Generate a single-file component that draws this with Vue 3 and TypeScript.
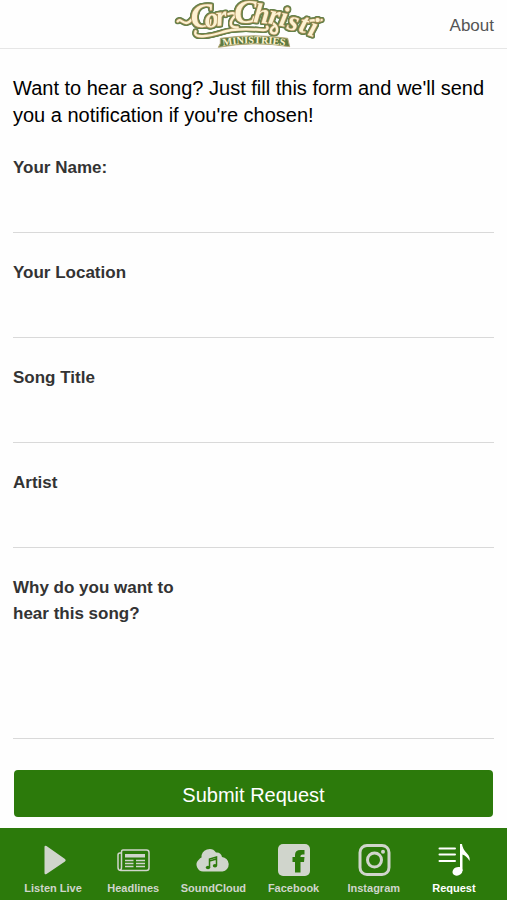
<script setup lang="ts">
import { reactive, ref } from 'vue'

type FieldKey = 'name' | 'location' | 'title' | 'artist'
type TabIcon = 'play' | 'news' | 'cloud' | 'facebook' | 'instagram' | 'request'

const fields: { key: FieldKey; label: string }[] = [
  { key: 'name', label: 'Your Name:' },
  { key: 'location', label: 'Your Location' },
  { key: 'title', label: 'Song Title' },
  { key: 'artist', label: 'Artist' },
]

const tabs: { icon: TabIcon; label: string }[] = [
  { icon: 'play', label: 'Listen Live' },
  { icon: 'news', label: 'Headlines' },
  { icon: 'cloud', label: 'SoundCloud' },
  { icon: 'facebook', label: 'Facebook' },
  { icon: 'instagram', label: 'Instagram' },
  { icon: 'request', label: 'Request' },
]

const form = reactive<Record<FieldKey, string>>({ name: '', location: '', title: '', artist: '' })
const reason = ref('')
const active = ref<TabIcon>('request')

// Outline layers of the logo's swashes, from the outer rim to the face
const layers = ['rim', 'face']
</script>

<template>
  <div class="screen">
    <header class="top">
      <svg class="logo" viewBox="10 0 510 147" role="img" aria-label="Cor Christi Ministries">
        <g class="lettering">
          <g v-for="layer in layers" :key="layer" :class="layer">
            <path d="M36 64C44 52 52 74 66 68C80 62 84 48 92 38" />
            <path d="M90 94C84 108 100 110 118 108C150 106 170 94 198 90C232 86 268 88 292 90C304 91 308 84 304 80" />
            <path d="M188 42C206 36 214 42 204 52C192 66 190 84 216 82" />
            <path d="M322 70C340 82 336 102 324 100C312 98 314 86 324 80" />
            <path d="M428 66C440 54 452 66 468 60" />
          </g>
          <text class="script" x="78 120 154" y="84 84 78" rotate="-6 -8 -8"><tspan class="cap">C</tspan>or</text>
          <text class="script" x="206 262 306 338 362 396 424" y="68 66 70 76 86 94 104" rotate="0 6 10 12 14 16 18"><tspan class="cap">C</tspan>hristi</text>
        </g>
        <path class="banner" d="M164 115Q264 100 366 115L372 140Q264 122 158 142L164 130Z" />
        <path id="ministries-arc" d="M164 139Q264 121 366 139" fill="none" />
        <text class="ministries"><textPath href="#ministries-arc" startOffset="50%" text-anchor="middle">MINISTRIES</textPath></text>
      </svg>
      <a class="about" href="#about">About</a>
    </header>

    <main class="content">
      <p class="intro">Want to hear a song? Just fill this form and we'll send you a notification if you're chosen!</p>
      <form class="form" @submit.prevent>
        <div v-for="field in fields" :key="field.key" class="field">
          <label :for="field.key">{{ field.label }}</label>
          <input :id="field.key" v-model="form[field.key]" type="text" />
        </div>
        <div class="field">
          <label for="reason">Why do you want to hear this song?</label>
          <textarea id="reason" v-model="reason"></textarea>
        </div>
        <button class="submit" type="submit">Submit Request</button>
      </form>
    </main>

    <nav class="tabs">
      <button
        v-for="tab in tabs"
        :key="tab.icon"
        class="tab"
        :class="{ active: tab.icon === active }"
        type="button"
        @click="active = tab.icon"
      >
        <svg class="icon" viewBox="0 0 36 36" aria-hidden="true">
          <path v-if="tab.icon === 'play'" class="solid" d="M9.500 5Q9.500 3 11.500 4L30 17Q31.500 18 30 19.500L11.500 32Q9.500 33 9.500 31Z" />
          <g v-else-if="tab.icon === 'news'">
            <path class="line" d="M8 8H31.500Q34 8 34 10.500V26Q34 28.500 31.500 28.500H6Q3 28.500 3 25.500V13Q3 11 5 11H6M8 8Q6.500 8 6.500 10V25Q6.500 28 5 28" />
            <path class="solid" d="M10 12H30V15.500H10Z" />
            <path class="line" d="M10 18.500H18.500M10 21.500H18.500M10 24.500H18.500M21 18.500H30M21 21.500H30M21 24.500H30" />
          </g>
          <g v-else-if="tab.icon === 'cloud'">
            <path class="solid" d="M9 29.500A6.800 6.800 0 0 1 4 17.500Q5 16 6.500 15.500A8 8 0 0 1 21 10.500Q26 10 27 15A7.300 7.300 0 0 1 27.500 29.500Z" />
            <path class="cut-line" d="M14.500 25.500V17L21.500 15V23.500M14.500 19L21.500 17" />
            <ellipse class="cut" cx="13" cy="25.500" rx="2.200" ry="1.700" />
            <ellipse class="cut" cx="20" cy="23.700" rx="2.200" ry="1.700" />
          </g>
          <g v-else-if="tab.icon === 'facebook'">
            <rect class="solid" x="2" y="2" width="32" height="32" rx="5" />
            <path class="cut" d="M19 30.500V20H16.500V15H19V13Q19 8 24.500 8H28.500V12.500H26.500Q24.500 12.500 24.500 14V15H28.500L28 20H24.500V30.500Z" />
          </g>
          <g v-else-if="tab.icon === 'instagram'">
            <rect class="ring" x="4" y="3.500" width="29" height="29" rx="7" />
            <circle class="ring" cx="18.500" cy="18" r="7" />
            <circle class="solid" cx="27" cy="9.800" r="2" />
          </g>
          <g v-else>
            <path class="bars" d="M3.500 6.500H19M3.500 12.500H19M3.500 19H19" />
            <ellipse class="solid" cx="21.500" cy="29.300" rx="5.200" ry="4.200" transform="rotate(-25 21.500 29.300)" />
            <path class="solid" d="M24 2H26Q26.500 7 31 11.500Q34.500 15 33.500 19Q31 14 26.500 12.500V29H24Z" />
          </g>
        </svg>
        <span>{{ tab.label }}</span>
      </button>
    </nav>
  </div>
</template>

<style>
body {
  margin: 0;
  background: #fefefe;
}
</style>

<style scoped>
.screen {
  display: flex;
  flex-direction: column;
  min-height: 100vh;
  font-family: "Liberation Sans", Arial, sans-serif;
  color: #000;
}

.top {
  display: grid;
  grid-template-columns: 1fr auto 1fr;
  align-items: center;
  height: 48px;
  padding: 0 13px;
  border-bottom: 1px solid #e6e6e6;
}

.logo {
  grid-column: 2;
  width: 170px;
  height: 49px;
}

.about {
  justify-self: end;
  padding-top: 3px;
  font-size: 17px;
  line-height: 24px;
  color: #555;
  text-decoration: none;
}

.lettering {
  filter:
    drop-shadow(3px 0 0 #64804a)
    drop-shadow(-3px 0 0 #64804a)
    drop-shadow(0 3px 0 #64804a)
    drop-shadow(0 -3px 0 #64804a);
}

.script {
  font-family: "Liberation Serif", serif;
  font-size: 84px;
  font-style: italic;
  font-weight: bold;
  fill: #fdf2d2;
  stroke: #a98d55;
  stroke-width: 5px;
  stroke-linejoin: round;
  paint-order: stroke;
}

.cap {
  font-size: 100px;
}

.rim,
.face {
  fill: none;
  stroke: #a98d55;
  stroke-width: 11px;
  stroke-linecap: round;
}

.face {
  stroke: #fdf2d2;
  stroke-width: 7px;
}

.banner {
  fill: #5f7a3f;
  stroke: #b5a878;
  stroke-width: 3px;
}

.ministries {
  font-family: "Liberation Serif", serif;
  font-size: 31px;
  font-weight: bold;
  fill: #fff3cf;
}

.content {
  flex: 1;
  padding: 26px 13px 11px;
}

.intro {
  margin: 0 0 26px;
  font-size: 20px;
  line-height: 27px;
}

.form {
  display: flex;
  flex-direction: column;
  gap: 27px;
}

.field {
  display: flex;
  flex-direction: column;
  border-bottom: 1px solid #d9d9d9;
}

.field label {
  max-width: 180px;
  font-size: 17px;
  font-weight: bold;
  line-height: 26px;
  color: #333;
}

.field input,
.field textarea {
  width: 100%;
  height: 51px;
  box-sizing: border-box;
  padding: 0;
  border: 0;
  outline: 0;
  background: transparent;
  font: inherit;
  font-size: 17px;
  resize: none;
}

.field textarea {
  height: 111px;
}

.submit {
  height: 47px;
  margin: 4px 1px 0;
  padding: 4px 0 0;
  border: 0;
  border-radius: 4px;
  background: #2c7a0b;
  color: #fff;
  font: inherit;
  font-size: 20px;
}

.tabs {
  display: grid;
  grid-template-columns: repeat(6, 1fr);
  padding: 14px 13px 5px;
  background: #2c7a0b;
}

.tab {
  display: flex;
  flex-direction: column;
  align-items: center;
  gap: 4px;
  padding: 0;
  border: 0;
  background: none;
  color: #d0d5cc;
  font: inherit;
  font-size: 11px;
  font-weight: bold;
  line-height: 13px;
  white-space: nowrap;
}

.tab.active {
  color: #fff;
}

.icon {
  width: 36px;
  height: 36px;
}

.solid {
  fill: currentColor;
}

.line,
.ring,
.bars {
  fill: none;
  stroke: currentColor;
  stroke-width: 1.5px;
}

.ring {
  stroke-width: 3px;
}

.bars {
  stroke-width: 2px;
  stroke-linecap: round;
}

.cut {
  fill: #2c7a0b;
}

.cut-line {
  fill: none;
  stroke: #2c7a0b;
  stroke-width: 1.5px;
}
</style>
